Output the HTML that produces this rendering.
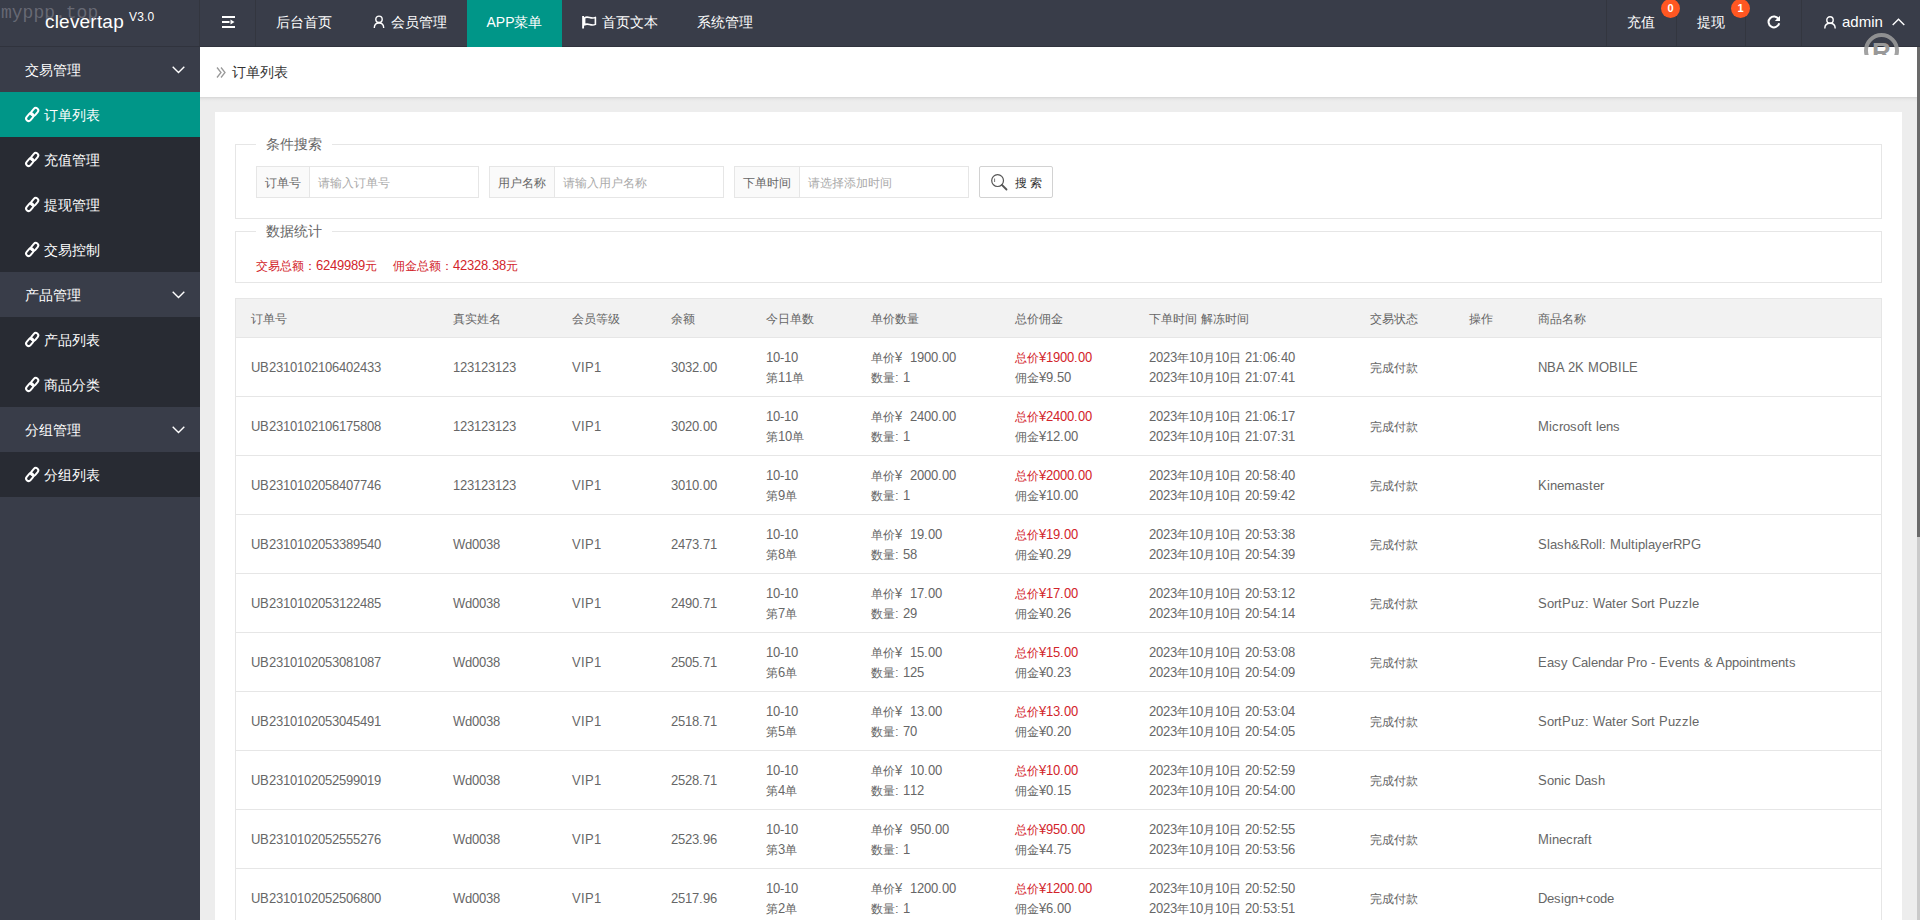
<!DOCTYPE html>
<html><head><meta charset="utf-8"><title>clevertap</title>
<style>
@font-face{font-family:"LS12";src:local("Liberation Sans");size-adjust:106%}
*{margin:0;padding:0;box-sizing:border-box}
html,body{width:1920px;height:920px;overflow:hidden;background:#f2f2f2;font-family:"Liberation Sans",sans-serif;color:#666}
i{font-style:normal}
svg{position:absolute;overflow:visible}
.hdr{position:absolute;left:0;top:0;width:1920px;height:47px;background:#393d49}
.hdr .bl{position:absolute;left:0;top:46px;width:1920px;height:1px;background:#30333d}
.logo{position:absolute;left:45px;top:11px;color:#fff;font-size:19px;letter-spacing:0.2px;white-space:nowrap}
.logo sup{font-size:12px;position:absolute;left:84px;top:-1px}
.wm{position:absolute;left:1px;top:3px;font-family:"Liberation Mono",monospace;font-size:18px;color:rgba(150,150,160,.5)}
.sep{position:absolute;top:0;width:1px;height:46px;background:#33363f}
.nav{position:absolute;top:0;height:46px;line-height:45px;color:#fff;font-size:14px;white-space:nowrap}
.nav.act{background:#009688;height:47px}
.badge{position:absolute;top:-1px;width:19px;height:19px;border-radius:10px;background:#ff5722;color:#fff;font-size:11px;line-height:19px;text-align:center;font-weight:bold}
.side{position:absolute;left:0;top:47px;width:200px;height:873px;background:#393d49}
.side .it{position:absolute;left:0;width:200px;height:45px;line-height:45px;color:#fff;font-size:14px}
.side .grp{background:#393d49}
.side .ch{background:#282b33}
.side .on{background:#009688}
.side .it .t{position:absolute;left:25px;top:1px}
.side .ch .t{left:44px}
.side .it svg{left:25px;top:14px}
.side .grp svg{left:172px;top:19px}
.main{position:absolute;left:200px;top:47px;width:1717px;height:873px;background:#ededed}
.bc{position:absolute;left:0;top:0;width:1717px;height:50px;background:#fff}
.bcs{position:absolute;left:0;top:50px;width:1717px;height:5px;background:linear-gradient(#d6d6d6,#e2e2e2 30%,#eaeaea 60%,#ededed)}
.bc .t{position:absolute;left:32px;top:16px;font-size:14px;line-height:18px;color:#333}
.card{position:absolute;left:15px;top:65px;width:1687px;height:820px;background:#fff}
.fs{position:absolute;border:1px solid #e6e6e6}
.fs .lg{position:absolute;left:20px;top:-11px;padding:0 10px;background:#fff;font-size:14px;line-height:20px;color:#666}
.ig{position:absolute;top:166px;height:32px;border:1px solid #e6e6e6;background:#fff}
.ig .lb{position:absolute;left:0;top:0;height:30px;line-height:32px;padding:0 8px;background:#fafafa;border-right:1px solid #e6e6e6;font-size:12px;color:#666;white-space:nowrap}
.ig .ph{position:absolute;top:0;height:30px;line-height:32px;font-size:12px;color:#aaa;white-space:nowrap}
.btn{position:absolute;left:979px;top:166px;width:74px;height:32px;border:1px solid #d2d2d2;border-radius:2px;background:#fff}
.btn .t{position:absolute;left:35px;top:7px;font-size:12px;line-height:18px;color:#333}
.stat{position:absolute;left:256px;top:258px;font-size:12px;line-height:16px;color:#d2232a;white-space:nowrap;font-family:"LS12","Liberation Sans",sans-serif}
.tbl{position:absolute;left:235px;top:298px;width:1647px;height:640px;border-left:1px solid #e6e6e6;border-right:1px solid #e6e6e6;border-top:1px solid #e6e6e6}
.th{position:absolute;left:0;top:0;width:1645px;height:39px;background:#f2f2f2;border-bottom:1px solid #e6e6e6}
.tr{position:absolute;left:0;width:1645px;height:59px;border-bottom:1px solid #e6e6e6;background:#fff}
.c{position:absolute;white-space:nowrap;font-size:12px;color:#666;font-family:"LS12","Liberation Sans",sans-serif}
.th .c{top:10px;line-height:20px}
.tr .s{top:20px;line-height:20px}
.tr .d{top:10px;line-height:20px}
.tr .d i{display:block;height:20px}
.red{color:#d2232a}
.sb{position:absolute;left:1917px;top:47px;width:3px;height:873px;background:#cacaca}
.sb .th2{position:absolute;left:0;top:0;width:3px;height:490px;background:#6a6a6a}
.reg{position:absolute;left:1864px;top:33px;width:35px;height:22px;overflow:hidden}
</style></head><body>
<div class="main">
  <div class="bc">
    <svg style="left:16px;top:20px" width="10" height="11" viewBox="0 0 10 11"><path d="M1 0.5 L5 5.5 L1 10.5 M5 0.5 L9 5.5 L5 10.5" fill="none" stroke="#999" stroke-width="1.3"/></svg>
    <span class="t">订单列表</span>
  </div>
  <div class="bcs"></div>
  <div class="card"></div>
</div>
<div class="fs" style="left:235px;top:144px;width:1647px;height:75px"><span class="lg">条件搜索</span></div>
<div class="ig" style="left:256px;width:223px"><span class="lb">订单号</span><span class="ph" style="left:61px">请输入订单号</span></div>
<div class="ig" style="left:489px;width:235px"><span class="lb">用户名称</span><span class="ph" style="left:73px">请输入用户名称</span></div>
<div class="ig" style="left:734px;width:235px"><span class="lb">下单时间</span><span class="ph" style="left:73px">请选择添加时间</span></div>
<div class="btn">
  <svg style="left:11px;top:7px" width="17" height="17" viewBox="0 0 17 17"><circle cx="6.6" cy="6.6" r="5.9" fill="none" stroke="#555" stroke-width="1.2"/><path d="M11 11 L15.5 15.5" stroke="#555" stroke-width="1.8" stroke-linecap="round"/><path d="M3.6 4.5 V8" stroke="#777" stroke-width="1"/></svg>
  <span class="t">搜 索</span>
</div>
<div class="fs" style="left:235px;top:231px;width:1647px;height:52px"><span class="lg">数据统计</span></div>
<div class="stat">交易总额：6249989元&nbsp;&nbsp;&nbsp;&nbsp;佣金总额：42328.38元</div>
<div class="tbl">
<div class="th"><span class="c" style="left:15px">订单号</span><span class="c" style="left:217px">真实姓名</span><span class="c" style="left:336px">会员等级</span><span class="c" style="left:435px">余额</span><span class="c" style="left:530px">今日单数</span><span class="c" style="left:635px">单价数量</span><span class="c" style="left:779px">总价佣金</span><span class="c" style="left:913px">下单时间 解冻时间</span><span class="c" style="left:1134px">交易状态</span><span class="c" style="left:1233px">操作</span><span class="c" style="left:1302px">商品名称</span></div>
<div class="tr" style="top:39px"><span class="c s" style="left:15px">UB2310102106402433</span><span class="c s" style="left:217px">123123123</span><span class="c s" style="left:336px">VIP1</span><span class="c s" style="left:435px">3032.00</span><span class="c d" style="left:530px"><i>10-10</i><i>第11单</i></span><span class="c d" style="left:635px"><i>单价¥&nbsp; 1900.00</i><i>数量:&nbsp;1</i></span><span class="c d" style="left:779px"><i class="red">总价¥1900.00</i><i>佣金¥9.50</i></span><span class="c d" style="left:913px"><i>2023年10月10日 21:06:40</i><i>2023年10月10日 21:07:41</i></span><span class="c s" style="left:1134px">完成付款</span><span class="c s" style="left:1302px">NBA 2K MOBILE</span></div>
<div class="tr" style="top:98px"><span class="c s" style="left:15px">UB2310102106175808</span><span class="c s" style="left:217px">123123123</span><span class="c s" style="left:336px">VIP1</span><span class="c s" style="left:435px">3020.00</span><span class="c d" style="left:530px"><i>10-10</i><i>第10单</i></span><span class="c d" style="left:635px"><i>单价¥&nbsp; 2400.00</i><i>数量:&nbsp;1</i></span><span class="c d" style="left:779px"><i class="red">总价¥2400.00</i><i>佣金¥12.00</i></span><span class="c d" style="left:913px"><i>2023年10月10日 21:06:17</i><i>2023年10月10日 21:07:31</i></span><span class="c s" style="left:1134px">完成付款</span><span class="c s" style="left:1302px">Microsoft lens</span></div>
<div class="tr" style="top:157px"><span class="c s" style="left:15px">UB2310102058407746</span><span class="c s" style="left:217px">123123123</span><span class="c s" style="left:336px">VIP1</span><span class="c s" style="left:435px">3010.00</span><span class="c d" style="left:530px"><i>10-10</i><i>第9单</i></span><span class="c d" style="left:635px"><i>单价¥&nbsp; 2000.00</i><i>数量:&nbsp;1</i></span><span class="c d" style="left:779px"><i class="red">总价¥2000.00</i><i>佣金¥10.00</i></span><span class="c d" style="left:913px"><i>2023年10月10日 20:58:40</i><i>2023年10月10日 20:59:42</i></span><span class="c s" style="left:1134px">完成付款</span><span class="c s" style="left:1302px">Kinemaster</span></div>
<div class="tr" style="top:216px"><span class="c s" style="left:15px">UB2310102053389540</span><span class="c s" style="left:217px">Wd0038</span><span class="c s" style="left:336px">VIP1</span><span class="c s" style="left:435px">2473.71</span><span class="c d" style="left:530px"><i>10-10</i><i>第8单</i></span><span class="c d" style="left:635px"><i>单价¥&nbsp; 19.00</i><i>数量:&nbsp;58</i></span><span class="c d" style="left:779px"><i class="red">总价¥19.00</i><i>佣金¥0.29</i></span><span class="c d" style="left:913px"><i>2023年10月10日 20:53:38</i><i>2023年10月10日 20:54:39</i></span><span class="c s" style="left:1134px">完成付款</span><span class="c s" style="left:1302px">Slash&amp;Roll: MultiplayerRPG</span></div>
<div class="tr" style="top:275px"><span class="c s" style="left:15px">UB2310102053122485</span><span class="c s" style="left:217px">Wd0038</span><span class="c s" style="left:336px">VIP1</span><span class="c s" style="left:435px">2490.71</span><span class="c d" style="left:530px"><i>10-10</i><i>第7单</i></span><span class="c d" style="left:635px"><i>单价¥&nbsp; 17.00</i><i>数量:&nbsp;29</i></span><span class="c d" style="left:779px"><i class="red">总价¥17.00</i><i>佣金¥0.26</i></span><span class="c d" style="left:913px"><i>2023年10月10日 20:53:12</i><i>2023年10月10日 20:54:14</i></span><span class="c s" style="left:1134px">完成付款</span><span class="c s" style="left:1302px">SortPuz: Water Sort Puzzle</span></div>
<div class="tr" style="top:334px"><span class="c s" style="left:15px">UB2310102053081087</span><span class="c s" style="left:217px">Wd0038</span><span class="c s" style="left:336px">VIP1</span><span class="c s" style="left:435px">2505.71</span><span class="c d" style="left:530px"><i>10-10</i><i>第6单</i></span><span class="c d" style="left:635px"><i>单价¥&nbsp; 15.00</i><i>数量:&nbsp;125</i></span><span class="c d" style="left:779px"><i class="red">总价¥15.00</i><i>佣金¥0.23</i></span><span class="c d" style="left:913px"><i>2023年10月10日 20:53:08</i><i>2023年10月10日 20:54:09</i></span><span class="c s" style="left:1134px">完成付款</span><span class="c s" style="left:1302px">Easy Calendar Pro - Events &amp; Appointments</span></div>
<div class="tr" style="top:393px"><span class="c s" style="left:15px">UB2310102053045491</span><span class="c s" style="left:217px">Wd0038</span><span class="c s" style="left:336px">VIP1</span><span class="c s" style="left:435px">2518.71</span><span class="c d" style="left:530px"><i>10-10</i><i>第5单</i></span><span class="c d" style="left:635px"><i>单价¥&nbsp; 13.00</i><i>数量:&nbsp;70</i></span><span class="c d" style="left:779px"><i class="red">总价¥13.00</i><i>佣金¥0.20</i></span><span class="c d" style="left:913px"><i>2023年10月10日 20:53:04</i><i>2023年10月10日 20:54:05</i></span><span class="c s" style="left:1134px">完成付款</span><span class="c s" style="left:1302px">SortPuz: Water Sort Puzzle</span></div>
<div class="tr" style="top:452px"><span class="c s" style="left:15px">UB2310102052599019</span><span class="c s" style="left:217px">Wd0038</span><span class="c s" style="left:336px">VIP1</span><span class="c s" style="left:435px">2528.71</span><span class="c d" style="left:530px"><i>10-10</i><i>第4单</i></span><span class="c d" style="left:635px"><i>单价¥&nbsp; 10.00</i><i>数量:&nbsp;112</i></span><span class="c d" style="left:779px"><i class="red">总价¥10.00</i><i>佣金¥0.15</i></span><span class="c d" style="left:913px"><i>2023年10月10日 20:52:59</i><i>2023年10月10日 20:54:00</i></span><span class="c s" style="left:1134px">完成付款</span><span class="c s" style="left:1302px">Sonic Dash</span></div>
<div class="tr" style="top:511px"><span class="c s" style="left:15px">UB2310102052555276</span><span class="c s" style="left:217px">Wd0038</span><span class="c s" style="left:336px">VIP1</span><span class="c s" style="left:435px">2523.96</span><span class="c d" style="left:530px"><i>10-10</i><i>第3单</i></span><span class="c d" style="left:635px"><i>单价¥&nbsp; 950.00</i><i>数量:&nbsp;1</i></span><span class="c d" style="left:779px"><i class="red">总价¥950.00</i><i>佣金¥4.75</i></span><span class="c d" style="left:913px"><i>2023年10月10日 20:52:55</i><i>2023年10月10日 20:53:56</i></span><span class="c s" style="left:1134px">完成付款</span><span class="c s" style="left:1302px">Minecraft</span></div>
<div class="tr" style="top:570px"><span class="c s" style="left:15px">UB2310102052506800</span><span class="c s" style="left:217px">Wd0038</span><span class="c s" style="left:336px">VIP1</span><span class="c s" style="left:435px">2517.96</span><span class="c d" style="left:530px"><i>10-10</i><i>第2单</i></span><span class="c d" style="left:635px"><i>单价¥&nbsp; 1200.00</i><i>数量:&nbsp;1</i></span><span class="c d" style="left:779px"><i class="red">总价¥1200.00</i><i>佣金¥6.00</i></span><span class="c d" style="left:913px"><i>2023年10月10日 20:52:50</i><i>2023年10月10日 20:53:51</i></span><span class="c s" style="left:1134px">完成付款</span><span class="c s" style="left:1302px">Design+code</span></div>
</div>
<div class="hdr"><div class="bl"></div>
  <div class="wm">myppp.top</div>
  <div class="logo">clevertap<sup>V3.0</sup></div>
  <div class="sep" style="left:199px"></div>
  <div class="sep" style="left:255px"></div>
  <svg style="left:222px;top:16px" width="14" height="12" viewBox="0 0 14 12"><path d="M0 1 H13 M0 6 H7.5 M0 11 H13" stroke="#fff" stroke-width="2"/><path d="M8.5 3.5 L12.5 6 L8.5 8.5 Z" fill="#fff"/></svg>
  <div class="nav" style="left:256px;padding:0 20px">后台首页</div>
  <svg style="left:373px;top:15px" width="13" height="14" viewBox="0 0 13 14"><circle cx="6" cy="4.3" r="3.2" fill="none" stroke="#fff" stroke-width="1.4"/><path d="M1.3 13 C1.3 9.6 3.4 8 6 8 C8.6 8 10.7 9.6 10.7 13" fill="none" stroke="#fff" stroke-width="1.4"/></svg>
  <div class="nav" style="left:391px">会员管理</div>
  <div class="nav act" style="left:467px;width:95px;text-align:center">APP菜单</div>
  <svg style="left:582px;top:16px" width="15" height="13" viewBox="0 0 15 13"><path d="M1.1 0 V12.5" stroke="#fff" stroke-width="1.9"/><path d="M2.6 1.8 C6 -0.6 8.8 3.6 13.4 1.4 V8.4 C8.8 10.6 6 6.4 2.6 8.8 Z" fill="none" stroke="#fff" stroke-width="1.6" stroke-linejoin="round"/></svg>
  <div class="nav" style="left:602px">首页文本</div>
  <div class="nav" style="left:697px">系统管理</div>

  <div class="sep" style="left:1606px"></div>
  <div class="sep" style="left:1676px"></div>
  <div class="sep" style="left:1745px"></div>
  <div class="sep" style="left:1801px"></div>
  <div class="nav" style="left:1627px">充值</div>
  <div class="badge" style="left:1661px">0</div>
  <div class="nav" style="left:1697px">提现</div>
  <div class="badge" style="left:1731px">1</div>
  <svg style="left:1767px;top:15px" width="14" height="14" viewBox="0 0 14 14"><path d="M11.6 4.2 A5.4 5.4 0 1 0 12.2 8.3" fill="none" stroke="#fff" stroke-width="2"/><path d="M13 0.8 V6 H7.8 Z" fill="#fff"/></svg>
  <svg style="left:1824px;top:16px" width="12" height="13" viewBox="0 0 12 13"><circle cx="6" cy="4" r="3.2" fill="none" stroke="#fff" stroke-width="1.4"/><path d="M0.8 12.5 C0.8 9 3 7.3 6 7.3 C9 7.3 11.2 9 11.2 12.5" fill="none" stroke="#fff" stroke-width="1.4"/></svg>
  <div class="nav" style="left:1842px;top:-1px;font-size:15px">admin</div>
  <svg style="left:1892px;top:18px" width="13" height="8" viewBox="0 0 13 8"><path d="M0.7 7 L6.5 1.2 L12.3 7" fill="none" stroke="#fff" stroke-width="1.4"/></svg>
</div>
<div class="reg"><svg style="left:0;top:0" width="35" height="35" viewBox="0 0 35 35"><circle cx="17.5" cy="17.5" r="15.5" fill="none" stroke="#999" stroke-width="4" opacity=".9"/><text x="17.5" y="27.5" text-anchor="middle" font-family="Liberation Sans" font-weight="bold" font-size="26" fill="#999">R</text></svg></div>
<div class="side">
  <div class="it grp" style="top:0"><span class="t">交易管理</span><svg width="13" height="8" viewBox="0 0 13 8"><path d="M0.7 0.8 L6.5 6.6 L12.3 0.8" fill="none" stroke="#fff" stroke-width="1.4"/></svg></div>
  <div class="it ch on" style="top:45px"><svg width="15" height="16" viewBox="0 0 15 16"><g fill="none" stroke="#fff" stroke-width="2"><rect x="2.3" y="6.8" width="5" height="8.6" rx="2.5" transform="rotate(40 4.8 11.1)"/><rect x="7.1" y="1.5" width="5" height="8.6" rx="2.5" transform="rotate(40 9.6 5.8)"/></g></svg><span class="t">订单列表</span></div>
  <div class="it ch" style="top:90px"><svg width="15" height="16" viewBox="0 0 15 16"><g fill="none" stroke="#fff" stroke-width="2"><rect x="2.3" y="6.8" width="5" height="8.6" rx="2.5" transform="rotate(40 4.8 11.1)"/><rect x="7.1" y="1.5" width="5" height="8.6" rx="2.5" transform="rotate(40 9.6 5.8)"/></g></svg><span class="t">充值管理</span></div>
  <div class="it ch" style="top:135px"><svg width="15" height="16" viewBox="0 0 15 16"><g fill="none" stroke="#fff" stroke-width="2"><rect x="2.3" y="6.8" width="5" height="8.6" rx="2.5" transform="rotate(40 4.8 11.1)"/><rect x="7.1" y="1.5" width="5" height="8.6" rx="2.5" transform="rotate(40 9.6 5.8)"/></g></svg><span class="t">提现管理</span></div>
  <div class="it ch" style="top:180px"><svg width="15" height="16" viewBox="0 0 15 16"><g fill="none" stroke="#fff" stroke-width="2"><rect x="2.3" y="6.8" width="5" height="8.6" rx="2.5" transform="rotate(40 4.8 11.1)"/><rect x="7.1" y="1.5" width="5" height="8.6" rx="2.5" transform="rotate(40 9.6 5.8)"/></g></svg><span class="t">交易控制</span></div>
  <div class="it grp" style="top:225px"><span class="t">产品管理</span><svg width="13" height="8" viewBox="0 0 13 8"><path d="M0.7 0.8 L6.5 6.6 L12.3 0.8" fill="none" stroke="#fff" stroke-width="1.4"/></svg></div>
  <div class="it ch" style="top:270px"><svg width="15" height="16" viewBox="0 0 15 16"><g fill="none" stroke="#fff" stroke-width="2"><rect x="2.3" y="6.8" width="5" height="8.6" rx="2.5" transform="rotate(40 4.8 11.1)"/><rect x="7.1" y="1.5" width="5" height="8.6" rx="2.5" transform="rotate(40 9.6 5.8)"/></g></svg><span class="t">产品列表</span></div>
  <div class="it ch" style="top:315px"><svg width="15" height="16" viewBox="0 0 15 16"><g fill="none" stroke="#fff" stroke-width="2"><rect x="2.3" y="6.8" width="5" height="8.6" rx="2.5" transform="rotate(40 4.8 11.1)"/><rect x="7.1" y="1.5" width="5" height="8.6" rx="2.5" transform="rotate(40 9.6 5.8)"/></g></svg><span class="t">商品分类</span></div>
  <div class="it grp" style="top:360px"><span class="t">分组管理</span><svg width="13" height="8" viewBox="0 0 13 8"><path d="M0.7 0.8 L6.5 6.6 L12.3 0.8" fill="none" stroke="#fff" stroke-width="1.4"/></svg></div>
  <div class="it ch" style="top:405px"><svg width="15" height="16" viewBox="0 0 15 16"><g fill="none" stroke="#fff" stroke-width="2"><rect x="2.3" y="6.8" width="5" height="8.6" rx="2.5" transform="rotate(40 4.8 11.1)"/><rect x="7.1" y="1.5" width="5" height="8.6" rx="2.5" transform="rotate(40 9.6 5.8)"/></g></svg><span class="t">分组列表</span></div>
</div>
<div class="sb"><div class="th2"></div></div>
</body></html>
